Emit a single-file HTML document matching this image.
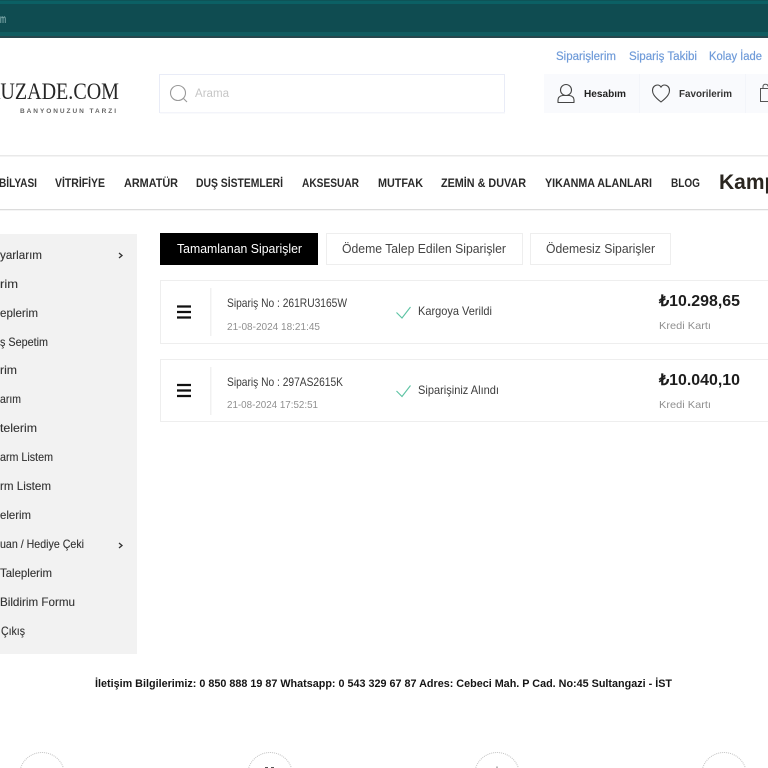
<!DOCTYPE html>
<html lang="tr"><head><meta charset="utf-8"><title>Siparişlerim</title>
<style>
html,body{margin:0;padding:0;width:768px;height:768px;overflow:hidden;background:#fff}
svg{display:block;font-family:"Liberation Sans",sans-serif}
.s{filter:blur(.3px)}
.nav{font-size:11.5px;font-weight:700;fill:#2a2a2a}
.side{font-size:12px;fill:#333;stroke:#333;stroke-width:.12}
.card{font-size:12px;fill:#3c3c3c}
.sub{font-size:10.5px;fill:#8f8f8f}
.link{font-size:11.5px;fill:#6f9bd9;stroke:#6f9bd9;stroke-width:.2}
.price{font-size:15.5px;font-weight:700;fill:#1d1d1d}
</style></head><body>
<svg class="s" width="768" height="768" viewBox="0 0 768 768" xmlns="http://www.w3.org/2000/svg">
<rect width="768" height="768" fill="#fff"/>
<!-- top bar -->
<rect width="768" height="37" fill="#0f4c51"/>
<rect width="768" height="1" fill="#0e5357"/>
<rect y="1" width="768" height="3" fill="#0b6064"/>
<rect y="32" width="768" height="4" fill="#115c60"/>
<rect y="36" width="768" height="2" fill="#27474d"/>
<text x="0" y="23" font-size="12" fill="#a9cccc" textLength="6" lengthAdjust="spacingAndGlyphs">m</text>
<!-- logo -->
<text x="-13" y="99" font-family="'Liberation Serif',serif" font-size="23" fill="#262626" textLength="132" lengthAdjust="spacingAndGlyphs">RUZADE.COM</text>
<text x="20" y="113" font-size="6.5" font-weight="700" fill="#666" textLength="96">BANYONUZUN TARZI</text>
<!-- search -->
<rect x="159.500" y="74.500" width="345" height="38" fill="#fff" stroke="#e9ecf7"/>
<rect x="160" y="112" width="345" height="1.500" fill="#f3f4fa"/>
<circle cx="178" cy="93" r="7.500" fill="none" stroke="#9a9a9a" stroke-width="1.100"/>
<path d="M183.500 98.500L187 102" stroke="#9a9a9a" stroke-width="1.100"/>
<text x="195" y="97" font-size="11.500" fill="#c6c6c6" textLength="34" lengthAdjust="spacingAndGlyphs">Arama</text>
<!-- top links -->
<text class="link" x="556" y="60" textLength="60" lengthAdjust="spacingAndGlyphs">Siparişlerim</text>
<text class="link" x="629" y="60" textLength="68" lengthAdjust="spacingAndGlyphs">Sipariş Takibi</text>
<text class="link" x="709" y="60" textLength="53" lengthAdjust="spacingAndGlyphs">Kolay İade</text>
<!-- account box -->
<rect x="544" y="74" width="224" height="39" fill="#f9fafd"/>
<rect x="639" y="74" width="1" height="39" fill="#f3f5fa"/>
<rect x="745" y="74" width="1" height="39" fill="#f3f5fa"/>
<circle cx="566" cy="90" r="5.500" fill="none" stroke="#444" stroke-width="1.100"/>
<path d="M558 102.500V100C558 97.500 560 96 562.500 95.500H569.500C572 96 574 97.500 574 100V102.500Z" fill="none" stroke="#444" stroke-width="1.100" stroke-linejoin="round"/>
<text x="584" y="97" font-size="10.500" font-weight="700" fill="#222" textLength="42" lengthAdjust="spacingAndGlyphs">Hesabım</text>
<path d="M661 102C654 96.500 652.500 93.500 652.500 90.500C652.500 87 655 85 657.500 85C659 85 660.300 85.800 661 87.200C661.700 85.800 663 85 664.500 85C667 85 669.500 87 669.500 90.500C669.500 93.500 668 96.500 661 102Z" fill="none" stroke="#444" stroke-width="1.100" stroke-linejoin="round"/>
<text x="679" y="97" font-size="10.500" font-weight="700" fill="#333" textLength="53" lengthAdjust="spacingAndGlyphs">Favorilerim</text>
<path d="M760.500 88.500H770V101.500H760.500ZM763 88.500V86.500C763 85 764 84.200 765.500 84.200C767 84.200 768 85 768 86.500" fill="none" stroke="#555" stroke-width="1"/>
<!-- nav -->
<rect y="155" width="768" height="1.500" fill="#e9e9e9"/>
<rect y="209" width="768" height="1" fill="#dcdcdc"/>
<rect y="210" width="768" height="1" fill="#f5f5f5"/>
<text class="nav" x="-1" y="187" textLength="38" lengthAdjust="spacingAndGlyphs">BİLYASI</text>
<text class="nav" x="55" y="187" textLength="50" lengthAdjust="spacingAndGlyphs">VİTRİFİYE</text>
<text class="nav" x="124" y="187" textLength="54" lengthAdjust="spacingAndGlyphs">ARMATÜR</text>
<text class="nav" x="196" y="187" textLength="87" lengthAdjust="spacingAndGlyphs">DUŞ SİSTEMLERİ</text>
<text class="nav" x="302" y="187" textLength="57" lengthAdjust="spacingAndGlyphs">AKSESUAR</text>
<text class="nav" x="378" y="187" textLength="45" lengthAdjust="spacingAndGlyphs">MUTFAK</text>
<text class="nav" x="441" y="187" textLength="85" lengthAdjust="spacingAndGlyphs">ZEMİN &amp; DUVAR</text>
<text class="nav" x="545" y="187" textLength="107" lengthAdjust="spacingAndGlyphs">YIKANMA ALANLARI</text>
<text class="nav" x="671" y="187" textLength="29" lengthAdjust="spacingAndGlyphs">BLOG</text>
<text x="719" y="189" font-size="21" font-weight="700" fill="#2a2620">Kampanyalar</text>
<!-- sidebar -->
<rect x="0" y="234" width="137" height="420" fill="#f2f2f2"/>
<g class="side">
<text x="0" y="259" textLength="42" lengthAdjust="spacingAndGlyphs">yarlarım</text>
<text x="0" y="288" textLength="18" lengthAdjust="spacingAndGlyphs">rim</text>
<text x="0" y="317" textLength="38" lengthAdjust="spacingAndGlyphs">eplerim</text>
<text x="0" y="346" textLength="48" lengthAdjust="spacingAndGlyphs">ş Sepetim</text>
<text x="0" y="374" textLength="17" lengthAdjust="spacingAndGlyphs">rim</text>
<text x="0" y="403" textLength="21" lengthAdjust="spacingAndGlyphs">arım</text>
<text x="0" y="432" textLength="37" lengthAdjust="spacingAndGlyphs">telerim</text>
<text x="0" y="461" textLength="53" lengthAdjust="spacingAndGlyphs">arm Listem</text>
<text x="0" y="490" textLength="51" lengthAdjust="spacingAndGlyphs">rm Listem</text>
<text x="0" y="519" textLength="31" lengthAdjust="spacingAndGlyphs">elerim</text>
<text x="0" y="548" textLength="84" lengthAdjust="spacingAndGlyphs">uan / Hediye Çeki</text>
<text x="0" y="577" textLength="52" lengthAdjust="spacingAndGlyphs">Taleplerim</text>
<text x="0" y="606" textLength="75" lengthAdjust="spacingAndGlyphs">Bildirim Formu</text>
<text x="1" y="635" textLength="24" lengthAdjust="spacingAndGlyphs">Çıkış</text>
</g>
<path d="M119 253L122 255.500L119 258M119 543L122 545.500L119 548" fill="none" stroke="#333" stroke-width="1.300"/>
<!-- tabs -->
<rect x="160" y="233" width="158" height="32" fill="#000"/>
<text x="177" y="253" font-size="12.500" fill="#fff" textLength="125" lengthAdjust="spacingAndGlyphs">Tamamlanan Siparişler</text>
<rect x="326.500" y="233.500" width="196" height="31" fill="#fff" stroke="#eee"/>
<text x="342" y="253" font-size="12.500" fill="#444" textLength="164" lengthAdjust="spacingAndGlyphs">Ödeme Talep Edilen Siparişler</text>
<rect x="530.500" y="233.500" width="140" height="31" fill="#fff" stroke="#eee"/>
<text x="546" y="253" font-size="12.500" fill="#444" textLength="109" lengthAdjust="spacingAndGlyphs">Ödemesiz Siparişler</text>
<!-- card 1 -->
<rect x="160.500" y="280.500" width="620" height="63" fill="#fff" stroke="#eee"/>
<path d="M177 306.500H191M177 312H191M177 317.500H191" stroke="#111" stroke-width="2.300"/>
<rect x="210" y="288" width="1.500" height="48" fill="#f1f1f1"/>
<text class="card" x="227" y="307" textLength="120" lengthAdjust="spacingAndGlyphs">Sipariş No : 261RU3165W</text>
<text class="sub" x="227" y="330" textLength="93" lengthAdjust="spacingAndGlyphs">21-08-2024 18:21:45</text>
<path d="M396.500 312.500L402 318L410.500 307" fill="none" stroke="#5cc3a3" stroke-width="1.100"/>
<text class="card" x="418" y="315" textLength="74" lengthAdjust="spacingAndGlyphs">Kargoya Verildi</text>
<text class="price" x="659" y="306" textLength="81" lengthAdjust="spacingAndGlyphs">₺10.298,65</text>
<text class="sub" x="659" y="329" textLength="52" lengthAdjust="spacingAndGlyphs">Kredi Kartı</text>
<!-- card 2 -->
<rect x="160.500" y="359.500" width="620" height="62" fill="#fff" stroke="#eee"/>
<path d="M177 385H191M177 390.500H191M177 396H191" stroke="#111" stroke-width="2.300"/>
<rect x="210" y="367" width="1.500" height="48" fill="#f1f1f1"/>
<text class="card" x="227" y="386" textLength="116" lengthAdjust="spacingAndGlyphs">Sipariş No : 297AS2615K</text>
<text class="sub" x="227" y="408" textLength="91" lengthAdjust="spacingAndGlyphs">21-08-2024 17:52:51</text>
<path d="M396.500 391L402 396.500L410.500 385.500" fill="none" stroke="#5cc3a3" stroke-width="1.100"/>
<text class="card" x="418" y="394" textLength="81" lengthAdjust="spacingAndGlyphs">Siparişiniz Alındı</text>
<text class="price" x="659" y="385" textLength="81" lengthAdjust="spacingAndGlyphs">₺10.040,10</text>
<text class="sub" x="659" y="408" textLength="52" lengthAdjust="spacingAndGlyphs">Kredi Kartı</text>
<!-- footer -->
<text x="95" y="687" font-size="11" font-weight="700" fill="#151515" textLength="577" lengthAdjust="spacingAndGlyphs">İletişim Bilgilerimiz: 0 850 888 19 87 Whatsapp: 0 543 329 67 87 Adres: Cebeci Mah. P Cad. No:45 Sultangazi - İST</text>
<g fill="none" stroke="#c2c2c2" stroke-width="1" stroke-dasharray="1 1">
<circle cx="42" cy="775" r="22.500"/>
<circle cx="270" cy="775" r="22.500"/>
<circle cx="497" cy="775" r="22.500"/>
<circle cx="724" cy="775" r="22.500"/>
</g>
<path d="M265 767.500H268M271 767.500H274" stroke="#555" stroke-width="1"/>
<path d="M497 766.500V768" stroke="#888" stroke-width="1.200"/>
</svg>
</body></html>
